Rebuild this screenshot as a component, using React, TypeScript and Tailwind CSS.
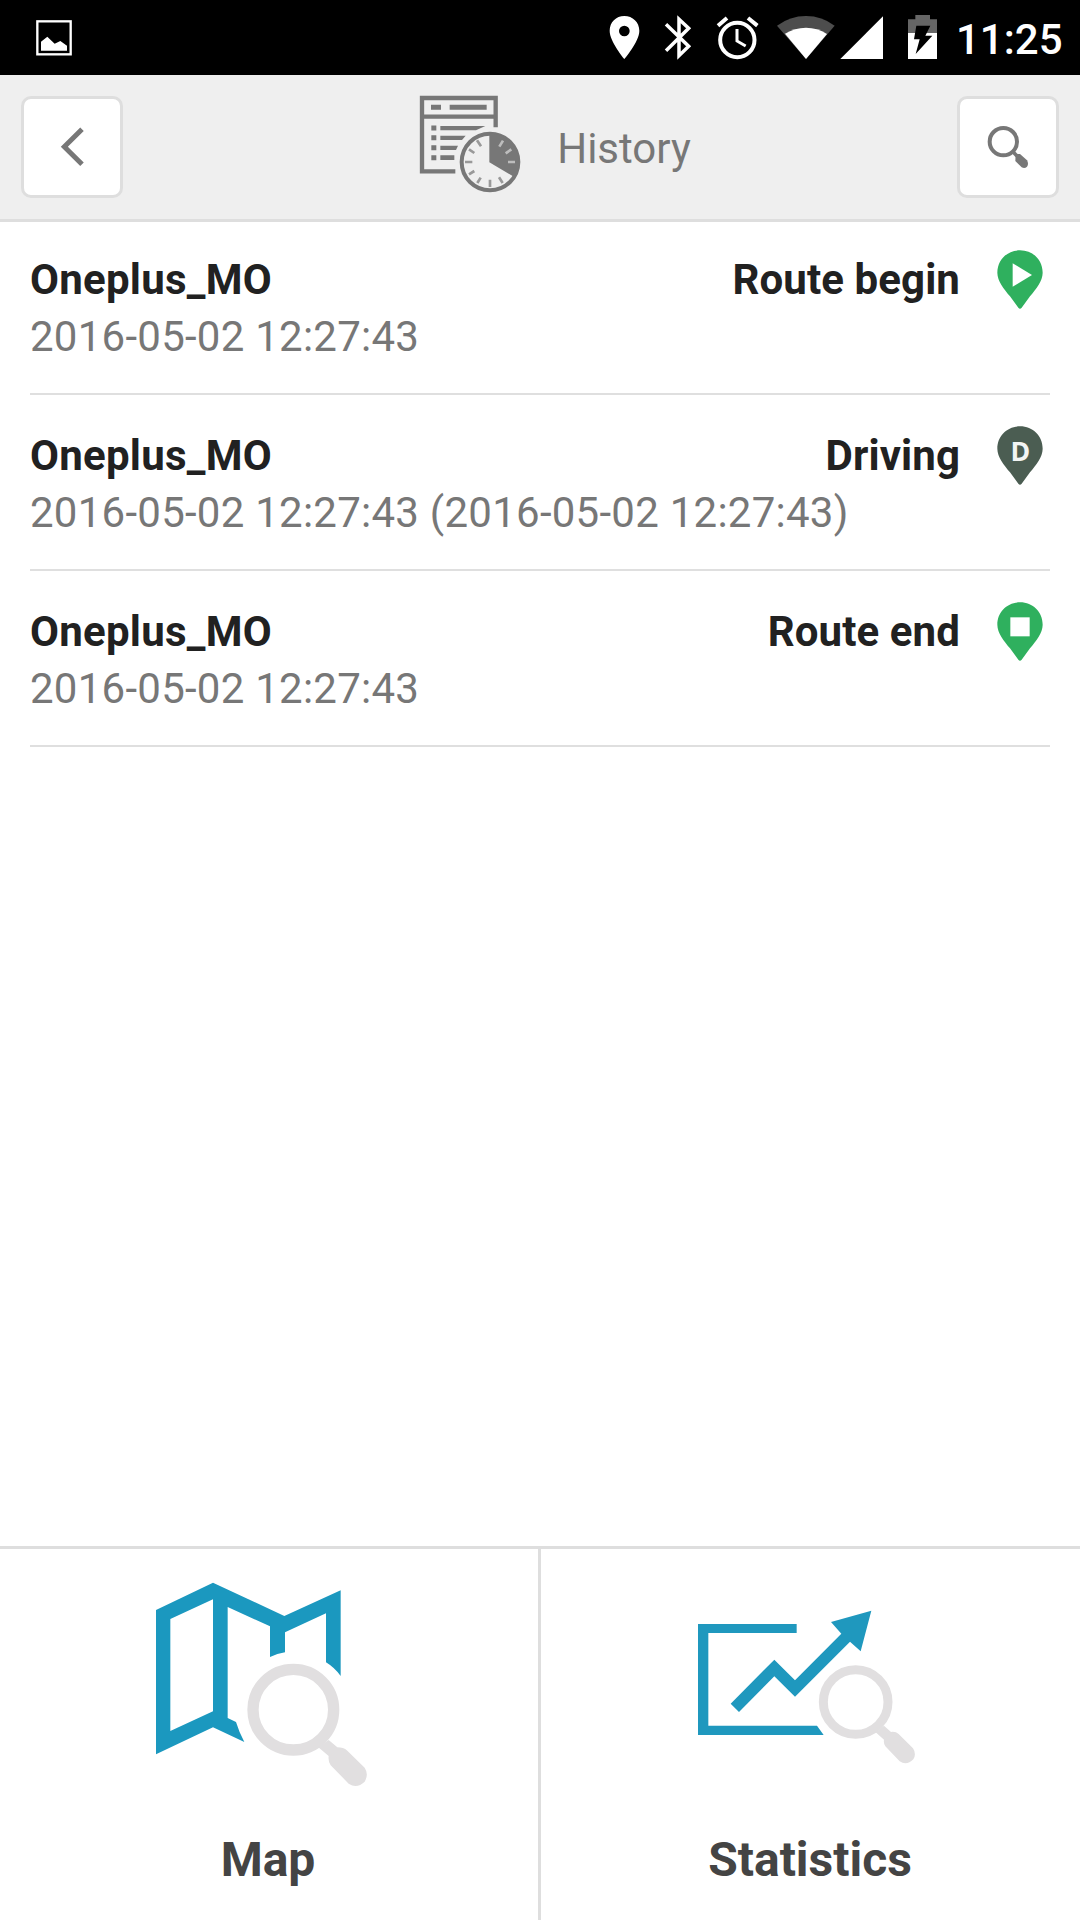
import React from 'react';

type PinKind = 'begin' | 'driving' | 'end';

const entries: { name: string; time: string; status: string; pin: PinKind }[] = [
  { name: 'Oneplus_MO', time: '2016-05-02 12:27:43', status: 'Route begin', pin: 'begin' },
  { name: 'Oneplus_MO', time: '2016-05-02 12:27:43 (2016-05-02 12:27:43)', status: 'Driving', pin: 'driving' },
  { name: 'Oneplus_MO', time: '2016-05-02 12:27:43', status: 'Route end', pin: 'end' },
];

const StatusBar = () => (
  <div className="flex h-[75px] shrink-0 items-start bg-black text-white">
    <svg className="ml-9 mt-5 h-9 w-9" viewBox="0 0 108 108" fill="none">
      <rect x="4" y="4" width="100" height="99" stroke="#fff" strokeWidth="7" />
      <path d="M15 92V65L34 50L56 71L73 63L93 77V92Z" fill="#fff" />
    </svg>
    <div className="ml-auto flex items-start">
      {/* location, bluetooth, alarm, wifi */}
      <svg className="h-[75px] w-[250px]" viewBox="0 0 750 225" fill="none">
        <path d="M103 48C78 48 59 67 59 92C59 125 103 177 103 177S148 125 148 92C148 67 128 48 103 48ZM103 109A16 16 0 1 1 103 77A16 16 0 0 1 103 109Z" fill="#fff" />
        <path d="M228 73L296 139L267 167V58L296 85L228 152" stroke="#fff" strokeWidth="10.5" />
        <circle cx="442" cy="120" r="51.5" stroke="#fff" strokeWidth="12" />
        <path d="M441 87V123L467 138" stroke="#fff" strokeWidth="9" />
        <path d="M384 77L411 54M474 54L502 77" stroke="#fff" strokeWidth="12" />
        <path d="M648 177L561 77Q600 48 648 48T734 77Z" fill="#4d4d4d" />
        <path d="M648 177L585 101Q614 83 648 83T711 102Z" fill="#fff" />
      </svg>
      {/* signal, battery */}
      <svg className="h-[75px] w-[116px]" viewBox="30 0 348 225">
        <path d="M31 177L159 49V177Z" fill="#fff" />
        <path d="M234 100V58H256V45H300V58H321V100Z" fill="#666" />
        <path d="M234 99H321V177H234Z" fill="#fff" />
        <path d="M259 77H301L286 107H307L257 162L269 118H252Z" fill="#000" />
      </svg>
      <span className="mr-5 mt-[15px] w-[104px] whitespace-nowrap text-[42px] font-medium leading-[49px]">
        11:25
      </span>
    </div>
  </div>
);

const Header = () => (
  <header className="flex h-[147px] shrink-0 items-start justify-between border-b-[3px] border-[#dedede] bg-[#efefef]">
    <button className="ml-[21px] mt-[21px] h-[102px] w-[102px] rounded-[10px] border-[3px] border-[#dedede] bg-white">
      <svg className="h-24 w-24" viewBox="72 297 288 288" fill="none">
        <path d="M246 388L193 440L246 493" stroke="#777" strokeWidth="15" />
      </svg>
    </button>
    <div className="flex items-start pl-[30px]">
      <svg className="mt-5 h-[99px] w-[103px]" viewBox="57 45 309 297" fill="none">
        <path d="M287 142V54H66V274H166M66 110H287" stroke="#777" strokeWidth="13" />
        <path d="M93 82H123M149 82H260" stroke="#777" strokeWidth="15" />
        <path d="M94 144H109M94 173H109M94 203H109M94 233H109" stroke="#777" strokeWidth="15" />
        <path d="M121 138H256L228 151H121ZM121 167H197L186 180H121ZM121 197H174L168 210H121ZM121 226H163V240H121Z" fill="#777" />
        <circle cx="270" cy="246" r="85" stroke="#777" strokeWidth="12" />
        <path d="M268 161A85 85 0 0 1 343 291L268 247Z" fill="#777" />
        <path
          d="M231 181L243 199M207 208L223 219M195 246H217M207 283L223 273M232 309L242 293M270 321V299M308 309L297 292"
          stroke="#999"
          strokeWidth="8"
        />
        <path d="M309 182L298 200M334 208L317 220M345 246H324" stroke="#bdbdbd" strokeWidth="8" />
      </svg>
      <span className="ml-[35px] mt-[49px] text-[42px] leading-[49px] text-[#777]">History</span>
    </div>
    <button className="mr-[21px] mt-[21px] h-[102px] w-[102px] rounded-[10px] border-[3px] border-[#dedede] bg-white">
      <svg className="h-24 w-24" viewBox="60 57 288 288" fill="none">
        <circle cx="190" cy="185" r="41" stroke="#777" strokeWidth="12" />
        <path d="M217 213L231 228" stroke="#777" strokeWidth="11" />
        <path d="M227 222L240 222L261 241Q267 252 261 260Q254 267 245 262L226 243Z" fill="#777" />
      </svg>
    </button>
  </header>
);

const Pin = ({ kind }: { kind: PinKind }) => (
  <svg className="h-[59px] w-[46px]" viewBox="891 61 138 177">
    <path
      d="M960 62C921 62 892 91 892 129C892 154 912 178 930 200L955 234Q960 240 965 234L990 200C1008 178 1028 154 1028 129C1028 91 999 62 960 62Z"
      fill={kind === 'driving' ? '#4b5d52' : '#2fb05e'}
    />
    {kind === 'begin' && <path d="M938 101L996 136L938 171Z" fill="#fff" />}
    {kind === 'end' && <path d="M931 107H989V164H931Z" fill="#fff" />}
    {kind === 'driving' && (
      <text x="961" y="165" textAnchor="middle" fontSize="80" fontWeight="700" fill="#f2f4f3" fontFamily="Open Sans, sans-serif">
        D
      </text>
    )}
  </svg>
);

const HistoryList = () => (
  <ul className="-mt-[3px] flex-1 px-[30px]">
    {entries.map((entry) => (
      <li key={entry.status} className="flex h-[176px] justify-between border-b-2 border-[#dfdfdf] pt-8 text-[42px] leading-[57px]">
        <div className="w-0 whitespace-nowrap tracking-[0.25px]">
          <p className="font-bold text-[#212121]">{entry.name}</p>
          <p className="text-[#777]">{entry.time}</p>
        </div>
        <div className="flex items-start">
          <p className="font-bold tracking-[0.1px] text-[#212121]">{entry.status}</p>
          <div className="-mt-px ml-[37px] mr-[7px]">
            <Pin kind={entry.pin} />
          </div>
        </div>
      </li>
    ))}
  </ul>
);

const MapIcon = () => (
  <svg className="h-[205px] w-[212px]" viewBox="78 156 636 615" fill="none">
    <path
      d="M78 240L249 158L463 258L632 181V438Q614 413 588 397V250L465 307V367Q442 371 420 381V289L293 231V564L318 576Q327 606 343 636L249 592L78 673ZM121 267V603L249 544V208Z"
      fill="#1b98bf"
      fillRule="evenodd"
    />
    <circle cx="490" cy="539" r="121" stroke="#e1dfe0" strokeWidth="34" />
    <path d="M565 652L596 630L622 652Q640 652 652 662L704 713Q717 733 704 755Q681 777 656 761L602 706Q594 695 596 678Z" fill="#e1dfe0" />
  </svg>
);

const StatisticsIcon = () => (
  <svg className="h-[154px] w-[218px]" viewBox="84 240 654 462" fill="none">
    <path d="M84 282H380V309H115V587H441L461 615H84Z" fill="#1f98be" />
    <path d="M182 521L313 389L375 451L514 311L483 276L604 242L572 364L540 335L375 500L313 439L207 546Z" fill="#1f98be" />
    <circle cx="557" cy="516" r="97" stroke="#e1dfe0" strokeWidth="27" />
    <path d="M617 607L642 587L663 606Q677 604 686 612L729 655Q740 672 730 688Q710 708 689 694L646 649Q640 640 642 629Z" fill="#e1dfe0" />
  </svg>
);

const Footer = () => (
  <footer className="flex h-[374px] shrink-0 border-t-[3px] border-[#dedede] text-[48px] font-bold leading-[56px] text-[#444]">
    <button className="flex w-[541px] flex-col items-center justify-start border-r-[3px] border-[#dedede]">
      <div className="mt-[33px] h-[250px] pr-[15px]">
        <MapIcon />
      </div>
      <span className="pr-[2px]">Map</span>
    </button>
    <button className="flex flex-1 flex-col items-center justify-start">
      <div className="mt-[61px] h-[222px] pr-[8px]">
        <StatisticsIcon />
      </div>
      <span className="pr-px">Statistics</span>
    </button>
  </footer>
);

const App = () => {
  return (
    <div className="flex h-[1920px] w-[1080px] flex-col overflow-hidden bg-white font-['Roboto',sans-serif]">
      <StatusBar />
      <Header />
      <HistoryList />
      <Footer />
    </div>
  );
};

export default App;
